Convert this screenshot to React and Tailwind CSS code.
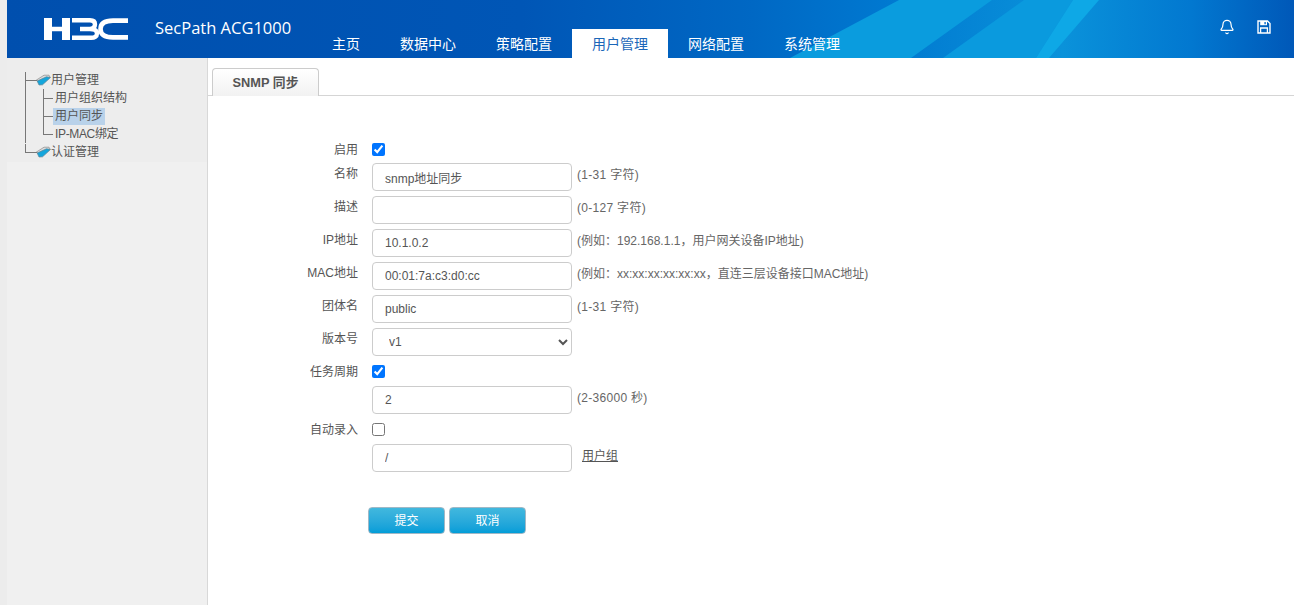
import React from 'react';
import { Bell } from 'lucide-react';

const CJK = "font-['Liberation_Sans','Noto_Sans_CJK_SC',sans-serif]";

const navItems = ['主页', '数据中心', '策略配置', '用户管理', '网络配置', '系统管理'];

const Logo = () => (
  <svg width="86" height="22" viewBox="0 0 86 22" fill="none" stroke="#fff">
    {/* H */}
    <path d="M5 0V22M23 0V22" strokeWidth="8" />
    <path d="M5 11H23" strokeWidth="4.5" />
    {/* 3 */}
    <path d="M29 2.2H47Q52 2.2 52 6.2T47 11H37M47 11Q54 11 54 15.5T47 19.8H29" strokeWidth="4.4" />
    {/* C */}
    <path d="M85 2.6H70Q57.5 2.6 57.5 11T70 19.4H85" strokeWidth="4.6" />
  </svg>
);

const SaveIcon = () => (
  <svg width="14" height="14" viewBox="0 0 14 14" fill="none">
    <path d="M1 1H10.5L13 3.5V13H1Z" stroke="#fff" strokeWidth="1.4" />
    <path d="M3.2 1H10V5.2H3.2Z" fill="#fff" />
    <path d="M7.4 2H8.8V4.2H7.4Z" fill="#0a6cc8" />
    <path d="M3.6 13V8H10.4V13" stroke="#fff" strokeWidth="1.3" />
  </svg>
);

const Folder = () => (
  <svg width="15" height="12" viewBox="0 0 15 12" className="shrink-0">
    <path d="M0.5 6L8 1.2L13 1.2L14 3L4 9Z" fill="#dcdcdc" stroke="#8a8a8a" strokeWidth="0.7" />
    <path d="M3 11L1.2 7L10.5 2.8L14.5 3.5L6.5 10.8Z" fill="#14a6dc" stroke="#5b8294" strokeWidth="0.7" />
  </svg>
);

const RootNode = ({ label, last }) => (
  <div className="relative flex h-[18px] items-center pl-[29px]">
    <span className={`absolute left-[18px] top-[1px] w-px bg-[#777] ${last ? 'h-[9px]' : 'h-[18px]'}`} />
    <span className="absolute left-[18px] top-[9px] h-px w-[12px] bg-[#777]" />
    <Folder />
    <span>{label}</span>
  </div>
);

const ChildNode = ({ label, active, last, tight }) => (
  <div className="relative flex h-[18px] items-center pl-[46px]">
    <span className="absolute left-[18px] top-0 h-[18px] w-px bg-[#777]" />
    <span className={`absolute left-[36px] top-0 w-px bg-[#777] ${last ? 'h-[10px]' : 'h-[18px]'}`} />
    <span className="absolute left-[36px] top-[9px] h-px w-[10px] bg-[#777]" />
    <span className={`px-[2px] leading-[17px] ${active ? 'bg-[#b9d2ea]' : ''} ${tight ? 'tracking-[-0.35px]' : ''}`}>{label}</span>
  </div>
);

const Row = ({ label, children, hint, wide }) => (
  <div className="flex h-[28px] items-start">
    <label className="w-[150px] pt-[2px] text-right leading-[18px] text-[#555]">{label}</label>
    <div className="ml-[14px] flex items-center">
      {children}
      {hint && <span className={`ml-[5px] -mt-[5px] text-[#666] ${wide ? 'tracking-[0.3px]' : ''}`}>{hint}</span>}
    </div>
  </div>
);

const TextInput = ({ value = '' }) => (
  <input
    type="text"
    readOnly
    value={value}
    className="h-[28px] w-[200px] rounded-[4px] border border-[#ccc] bg-white px-3 text-[12px] text-[#555] outline-none"
  />
);

const CheckRow = ({ label, checked }) => (
  <div className="flex h-[14px] items-center">
    <label className="w-[150px] pt-[2px] text-right leading-[14px] text-[#555]">{label}</label>
    <input type="checkbox" readOnly checked={checked} className="ml-[14px] h-[13px] w-[13px]" />
  </div>
);

const SubmitButton = ({ label }) => (
  <button className="h-[27px] w-[77px] rounded-[4px] border border-[#9fb8c6] bg-gradient-to-b from-[#41b8de] to-[#009dd8] text-[12px] text-white">
    {label}
  </button>
);

export default function App() {
  return (
    <div className={`flex h-screen w-full flex-col overflow-hidden bg-white pl-[7px] text-[12px] text-[#444] ${CJK}`}>
      <span className="absolute left-0 top-0 h-full w-[7px] bg-[#ececec]" />
      {/* Header */}
      <header className="relative flex h-[58px] shrink-0 items-stretch bg-[linear-gradient(90deg,#004fae_0%,#0056b6_40%,#0068c4_58%,#0078d0_68%,#0a92da_82%,#0278d0_92%,#0058b8_100%)]">
        <svg className="absolute inset-0" width="1287" height="58" viewBox="7 0 1287 58">
          <path d="M790 58L899 0H992L911 58Z" fill="#0a9cde" />
          <path d="M943 58L1024 0H1073L1036 58Z" fill="#0a9ade" />
          <path d="M1036 58H1049L1099 0H1073Z" fill="#0ea8e6" />
        </svg>
        <div className="relative ml-[36px] mt-[18px]">
          <Logo />
        </div>
        <div className="relative ml-[26px] mt-[17px] font-['Open_Sans'] text-[16.5px] leading-[22px] text-white">SecPath ACG1000</div>
        <nav className="absolute bottom-0 left-[305px] flex h-[29px]">
          {navItems.map((item) => (
            <a
              key={item}
              className={`px-5 pt-[7px] text-[14px] leading-[16px] ${item === '用户管理' ? 'bg-white text-[#1a66b8]' : 'text-white'}`}
            >
              {item}
            </a>
          ))}
        </nav>
        <div className="absolute right-[23px] top-[19px] flex items-center gap-[22px] text-white">
          <Bell size={16} strokeWidth={1.8} />
          <SaveIcon />
        </div>
      </header>

      <div className="flex min-h-0 flex-1">
        {/* Sidebar */}
        <aside className="w-[201px] shrink-0 border-r border-[#d8d8d8] bg-[#f0f0f0]">
          <div className="h-[104px] bg-[#ededed] pt-[13px] text-[#555]">
            <RootNode label="用户管理" />
            <ChildNode label="用户组织结构" />
            <ChildNode label="用户同步" active />
            <ChildNode label="IP-MAC绑定" last tight />
            <RootNode label="认证管理" last />
          </div>
        </aside>

        {/* Main */}
        <main className="flex-1">
          <div className="mt-[10px] h-[28px] border-b border-[#d5d5d5] pl-[4px]">
            <div className="flex h-[28px] w-[107px] items-center justify-center rounded-t-[4px] border border-b-0 border-[#ccc] bg-gradient-to-b from-white to-[#f2f2f2] text-[12.8px] font-bold text-[#555]">
              SNMP 同步
            </div>
          </div>

          <form className="mt-[46px] flex flex-col">
            <CheckRow label="启用" checked />
            <div className="mt-[7px] flex flex-col gap-[5px]">
              <Row label="名称" hint="(1-31 字符)" wide><TextInput value="snmp地址同步" /></Row>
              <Row label="描述" hint="(0-127 字符)" wide><TextInput /></Row>
              <Row label="IP地址" hint="(例如：192.168.1.1，用户网关设备IP地址)"><TextInput value="10.1.0.2" /></Row>
              <Row label="MAC地址" hint="(例如：xx:xx:xx:xx:xx:xx，直连三层设备接口MAC地址)"><TextInput value="00:01:7a:c3:d0:cc" /></Row>
              <Row label="团体名" hint="(1-31 字符)" wide><TextInput value="public" /></Row>
              <Row label="版本号">
                <select className="h-[28px] w-[200px] rounded-[4px] border border-[#ccc] bg-white px-3 text-[12px] text-[#555] outline-none">
                  <option>v1</option>
                </select>
              </Row>
            </div>
            <div className="mt-[8px]"><CheckRow label="任务周期" checked /></div>
            <div className="mt-[8px]"><Row label="" hint="(2-36000 秒)" wide><TextInput value="2" /></Row></div>
            <div className="mt-[8px]"><CheckRow label="自动录入" /></div>
            <div className="mt-[8px]">
              <Row label="">
                <TextInput value="/" />
                <a className="ml-[10px] -mt-[5px] text-[#555] underline">用户组</a>
              </Row>
            </div>
            <div className="ml-[160px] mt-[35px] flex gap-[4px]">
              <SubmitButton label="提交" />
              <SubmitButton label="取消" />
            </div>
          </form>
        </main>
      </div>
    </div>
  );
}
